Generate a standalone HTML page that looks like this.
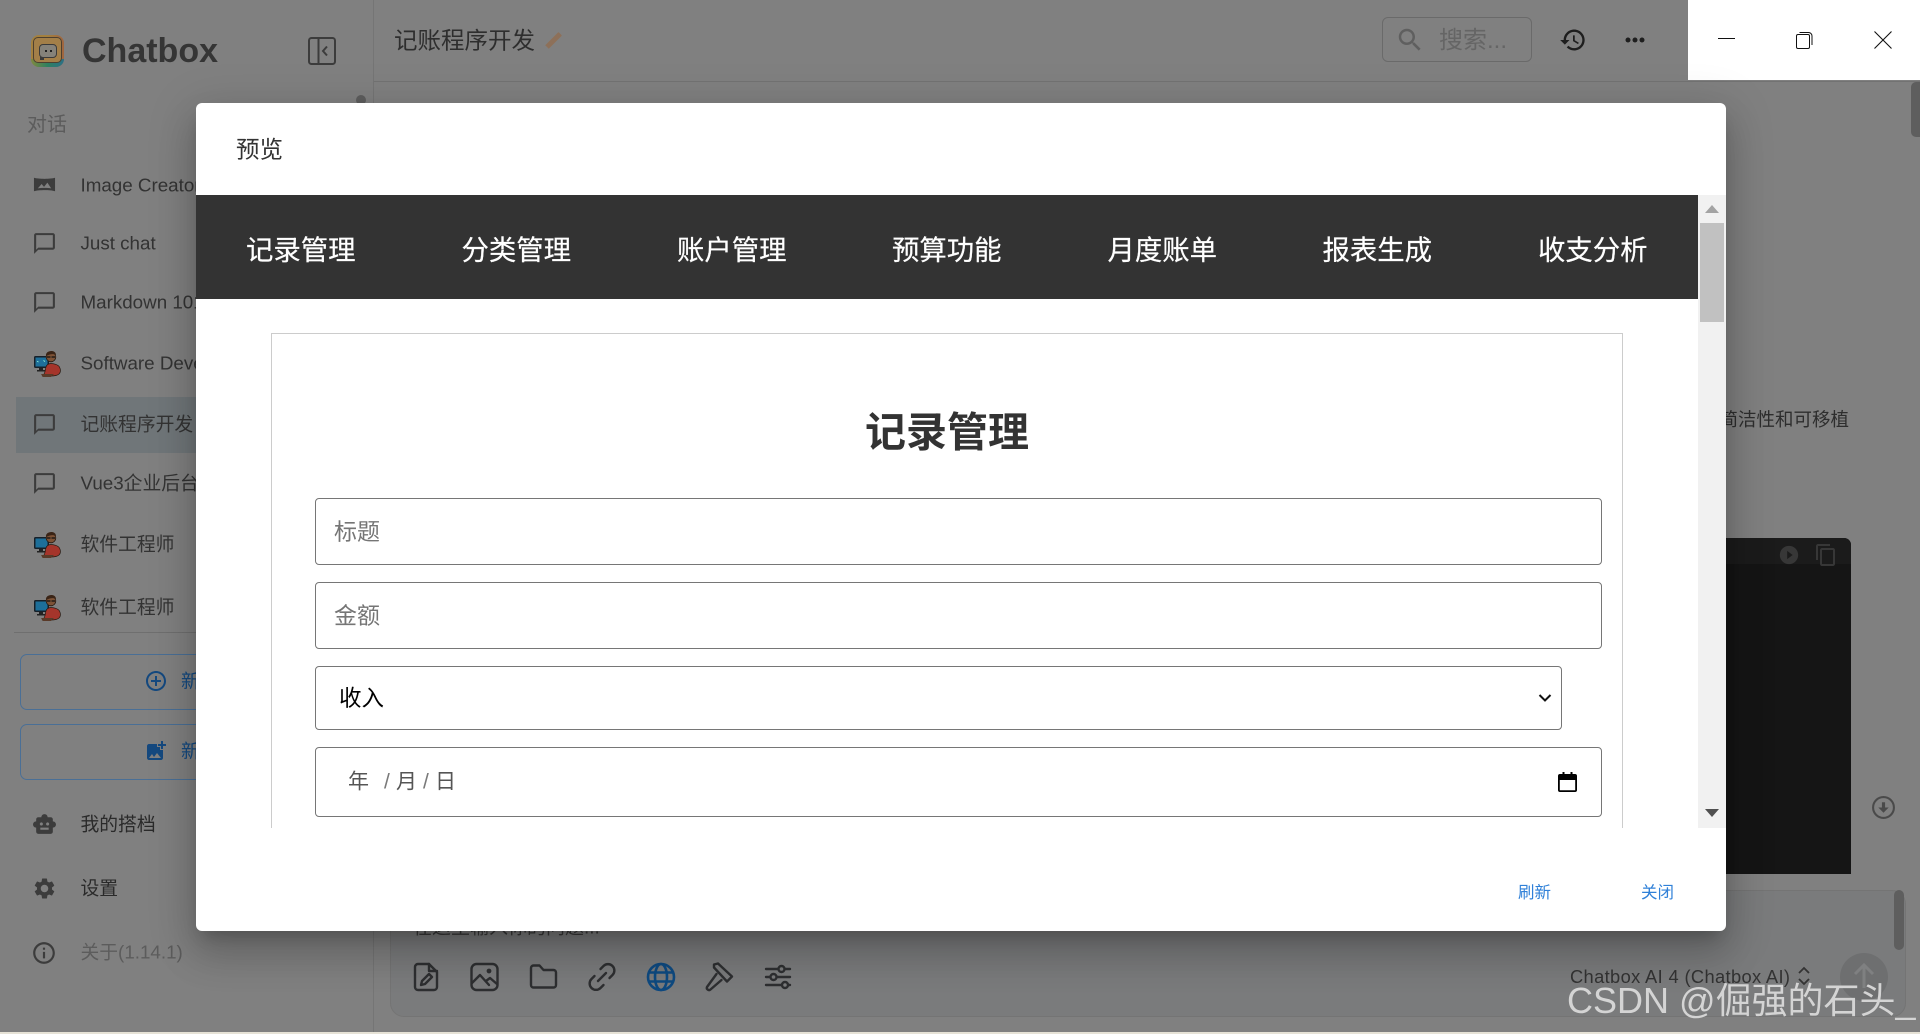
<!DOCTYPE html>
<html lang="zh-CN"><head><meta charset="utf-8"><title>Chatbox</title>
<style>
*{box-sizing:border-box}
html,body{margin:0;padding:0;width:1920px;height:1034px;overflow:hidden;background:#808080;font-family:"Liberation Sans","Noto Sans CJK SC",sans-serif}
.a{position:absolute}
.t{position:absolute;white-space:nowrap;line-height:1;transform:translateY(calc(-50% + 1px))}
svg{position:absolute;display:block;overflow:visible}
.s{font-size:18.8px;color:#333;left:80.5px}
.n{font-size:27.4px;color:#fff;top:249px;-webkit-text-stroke:.2px #fff}
.in{position:absolute;border:1.4px solid #767676;border-radius:4px;background:#fff}
</style></head><body>

<!-- background app -->
<div class="a" style="left:0;top:0;width:1920px;height:1032px;background:#808080"></div>
<div class="a" style="left:0;top:1032px;width:1920px;height:2px;background:#e6e2d6"></div>
<div class="a" style="left:373px;top:0;width:1px;height:1032px;background:#757575"></div>
<div class="a" style="left:374px;top:81px;width:1314px;height:1px;background:#727272"></div>
<div class="a" style="left:1688px;top:81px;width:232px;height:1px;background:#727272"></div>

<!-- logo -->
<div class="a" style="left:31px;top:35px;width:33px;height:32px;border-radius:8px;background:linear-gradient(90deg,#a3803f 0,#a3803f 50%,#a0653f 100%)"></div>
<div class="a" style="left:31px;top:59px;width:33px;height:8px;border-radius:0 0 8px 8px;background:linear-gradient(90deg,#7f8a3f,#2f8060 50%,#2b7088)"></div>
<div class="a" style="left:33px;top:37px;width:29px;height:26px;border-radius:5px;background:#a37f48;border:1px solid #4d4030"></div>
<div class="a" style="left:39px;top:44px;width:18px;height:14px;border-radius:4px;background:#85827a;border:1.6px solid #3a3a3a"></div>
<div class="a" style="left:40px;top:57px;width:4px;height:3px;background:#3a3a3a"></div>
<div class="a" style="left:45px;top:50px;width:2px;height:2px;background:#222"></div>
<div class="a" style="left:50px;top:50px;width:2px;height:2px;background:#222"></div>
<div class="t" style="left:82px;top:50px;font-size:34px;font-weight:700;color:#353535">Chatbox</div>
<svg style="left:308px;top:37px" width="28" height="28" viewBox="0 0 28 28" fill="none" stroke="#3c3c3c" stroke-width="2"><rect x="1" y="1" width="26" height="26" rx="2.5"/><path d="M10.5 1v26"/><path d="M19 9.5l-4 4.5 4 4.5"/></svg>

<div class="t" style="left:27px;top:124px;font-size:20px;color:#5c5c5c">对话</div>
<div class="a" style="left:356px;top:95px;width:10px;height:10px;border-radius:5px;background:#5e5e5e"></div>

<div class="a" style="left:16px;top:397px;width:180px;height:56px;background:#707679"></div>

<svg style="left:33px;top:173px" width="23" height="23" viewBox="0 0 24 24" fill="#3c3c3c"><path d="M1 5c5 1.5 17 1.5 22 0v14c-5-1.5-17-1.5-22 0z"/><path fill="#808080" d="M5 16l4-4.5 2.5 3 3.5-4.500 4 6c-4-.7-10-.7-14 0z"/></svg>
<div class="t s" style="top:185px">Image Creator</div>
<svg style="left:32px;top:231px" width="25" height="25" viewBox="0 0 24 24" fill="#3c3c3c"><path d="M20 2H4c-1.100 0-2 .9-2 2v18l4-4h14c1.100 0 2-.9 2-2V4c0-1.100-.9-2-2-2zm0 14H6l-2 2V4h16v12z"/></svg>
<div class="t s" style="top:243px">Just chat</div>
<svg style="left:32px;top:290px" width="25" height="25" viewBox="0 0 24 24" fill="#3c3c3c"><path d="M20 2H4c-1.100 0-2 .9-2 2v18l4-4h14c1.100 0 2-.9 2-2V4c0-1.100-.9-2-2-2zm0 14H6l-2 2V4h16v12z"/></svg>
<div class="t s" style="top:302px">Markdown 101</div>

<!-- avatars -->
<svg style="left:34px;top:350px" width="27" height="27" viewBox="0 0 27 27"><rect x="0" y="6" width="15" height="12" rx="1.500" fill="#172029"/><rect x="1.500" y="7.500" width="12" height="9" fill="#1d6f9a"/><path d="M4.500 12l-1.500-.7M9.500 10.500l1.500 1" stroke="#9fd" stroke-width=".8"/><path d="M5 18h4v2h3v1.500H3V20h2z" fill="#222"/><circle cx="17" cy="7" r="4.800" fill="#7d5236" stroke="#241a12" stroke-width=".8"/><path d="M12 6c-1-6 10-7 10-1-3-1.500-6-1-10 1z" fill="#3a2416"/><path d="M13 7h3.500M17.500 7H21" stroke="#111" stroke-width="1.200"/><path d="M8 26c2-1 3-3 3.500-7 .5-4 3-5.500 5.500-5.500s7 1 8.500 3.500c1.500 3 1.500 5-.5 7-2 1.800-5 2-8 2z" fill="#a5352b" stroke="#241a12" stroke-width=".7"/><path d="M7 24h13l-3 3H9z" fill="#5a3a28"/></svg>
<div class="t s" style="top:363px">Software Developer</div>

<svg style="left:32px;top:412px" width="25" height="25" viewBox="0 0 24 24" fill="#3c3c3c"><path d="M20 2H4c-1.100 0-2 .9-2 2v18l4-4h14c1.100 0 2-.9 2-2V4c0-1.100-.9-2-2-2zm0 14H6l-2 2V4h16v12z"/></svg>
<div class="t s" style="top:424px">记账程序开发</div>
<svg style="left:32px;top:471px" width="25" height="25" viewBox="0 0 24 24" fill="#3c3c3c"><path d="M20 2H4c-1.100 0-2 .9-2 2v18l4-4h14c1.100 0 2-.9 2-2V4c0-1.100-.9-2-2-2zm0 14H6l-2 2V4h16v12z"/></svg>
<div class="t s" style="top:483px">Vue3企业后台</div>

<svg style="left:34px;top:531px" width="27" height="27" viewBox="0 0 27 27"><rect x="0" y="6" width="15" height="12" rx="1.500" fill="#172029"/><rect x="1.500" y="7.500" width="12" height="9" fill="#1d6f9a"/><path d="M5 18h4v2h3v1.500H3V20h2z" fill="#222"/><circle cx="17" cy="7" r="4.800" fill="#7d5236" stroke="#241a12" stroke-width=".8"/><path d="M12 6c-1-6 10-7 10-1-3-1.500-6-1-10 1z" fill="#3a2416"/><path d="M13 7h3.500M17.500 7H21" stroke="#111" stroke-width="1.200"/><path d="M8 26c2-1 3-3 3.500-7 .5-4 3-5.500 5.500-5.500s7 1 8.500 3.500c1.500 3 1.500 5-.5 7-2 1.800-5 2-8 2z" fill="#a5352b" stroke="#241a12" stroke-width=".7"/><path d="M7 24h13l-3 3H9z" fill="#5a3a28"/></svg>
<div class="t s" style="top:544px">软件工程师</div>
<svg style="left:34px;top:594px" width="27" height="27" viewBox="0 0 27 27"><rect x="0" y="6" width="15" height="12" rx="1.500" fill="#172029"/><rect x="1.500" y="7.500" width="12" height="9" fill="#1d6f9a"/><path d="M5 18h4v2h3v1.500H3V20h2z" fill="#222"/><circle cx="17" cy="7" r="4.800" fill="#7d5236" stroke="#241a12" stroke-width=".8"/><path d="M12 6c-1-6 10-7 10-1-3-1.500-6-1-10 1z" fill="#3a2416"/><path d="M13 7h3.500M17.500 7H21" stroke="#111" stroke-width="1.200"/><path d="M8 26c2-1 3-3 3.500-7 .5-4 3-5.500 5.500-5.500s7 1 8.500 3.500c1.500 3 1.500 5-.5 7-2 1.800-5 2-8 2z" fill="#a5352b" stroke="#241a12" stroke-width=".7"/><path d="M7 24h13l-3 3H9z" fill="#5a3a28"/></svg>
<div class="t s" style="top:607px">软件工程师</div>

<div class="a" style="left:14px;top:632px;width:350px;height:1px;background:#6f6f6f"></div>
<div class="a" style="left:20px;top:654px;width:340px;height:56px;border:1.4px solid #4a6f96;border-radius:7px"></div>
<div class="a" style="left:20px;top:724px;width:340px;height:56px;border:1.4px solid #4a6f96;border-radius:7px"></div>
<svg style="left:144px;top:669px" width="24" height="24" viewBox="0 0 24 24" fill="#15497f"><path d="M13 7h-2v4H7v2h4v4h2v-4h4v-2h-4V7zm-1-5C6.480 2 2 6.480 2 12s4.480 10 10 10 10-4.480 10-10S17.520 2 12 2zm0 18c-4.410 0-8-3.590-8-8s3.590-8 8-8 8 3.590 8 8-3.590 8-8 8z"/></svg>
<div class="t" style="left:181px;top:681px;font-size:18.8px;color:#15497f">新对话</div>
<svg style="left:144px;top:739px" width="24" height="24" viewBox="0 0 24 24" fill="#15497f"><path d="M19 7v2.990s-1.990.01-2 0V7h-3s.01-1.990 0-2h3V2h2v3h3v2h-3zm-3 4V8h-3V5H5c-1.100 0-2 .9-2 2v12c0 1.100.9 2 2 2h12c1.100 0 2-.9 2-2v-8h-3zM5 19l3-4 2 3 3-4 4 5H5z"/></svg>
<div class="t" style="left:181px;top:751px;font-size:18.8px;color:#15497f">新图片</div>

<svg style="left:32px;top:812px" width="25" height="25" viewBox="0 0 24 24" fill="#3c3c3c"><path d="M20 9V7c0-1.100-.9-2-2-2h-3c0-1.660-1.340-3-3-3S9 3.340 9 5H6c-1.100 0-2 .9-2 2v2c-1.660 0-3 1.340-3 3s1.340 3 3 3v4c0 1.100.9 2 2 2h12c1.100 0 2-.9 2-2v-4c1.660 0 3-1.340 3-3s-1.340-3-3-3zM7.500 11.500c0-.83.67-1.500 1.500-1.500s1.500.67 1.500 1.500S9.830 13 9 13s-1.500-.67-1.500-1.500zM16 17H8v-2h8v2zm-1-4c-.83 0-1.500-.67-1.500-1.500S14.170 10 15 10s1.500.67 1.500 1.500S15.830 13 15 13z"/></svg>
<div class="t s" style="top:824px;color:#2a2a2a">我的搭档</div>
<svg style="left:32px;top:876px" width="25" height="25" viewBox="0 0 24 24" fill="#3c3c3c"><path d="M19.140 12.940c.04-.3.06-.61.06-.94 0-.32-.02-.64-.07-.94l2.030-1.580c.18-.14.23-.41.12-.61l-1.920-3.320c-.12-.22-.37-.29-.59-.22l-2.390.96c-.5-.38-1.030-.7-1.620-.94l-.36-2.540c-.04-.24-.24-.41-.48-.41h-3.840c-.24 0-.43.17-.47.41l-.36 2.540c-.59.24-1.130.57-1.620.94l-2.390-.96c-.22-.08-.47 0-.59.22L2.740 8.870c-.12.21-.08.47.12.61l2.030 1.580c-.05.3-.09.63-.09.94s.02.64.07.94l-2.030 1.580c-.18.14-.23.41-.12.61l1.920 3.320c.12.22.37.29.59.22l2.390-.96c.5.38 1.030.7 1.620.94l.36 2.540c.05.24.24.41.48.41h3.840c.24 0 .44-.17.47-.41l.36-2.540c.59-.24 1.130-.56 1.620-.94l2.390.96c.22.08.47 0 .59-.22l1.920-3.320c.12-.22.07-.47-.12-.61l-2.010-1.580zM12 15.600c-1.980 0-3.600-1.620-3.600-3.600s1.620-3.600 3.600-3.600 3.600 1.620 3.600 3.600-1.620 3.600-3.600 3.600z"/></svg>
<div class="t s" style="top:888px;color:#2a2a2a">设置</div>
<svg style="left:31px;top:940px" width="26" height="26" viewBox="0 0 24 24" fill="#3c3c3c"><path d="M11 7h2v2h-2zm0 4h2v6h-2zm1-9C6.480 2 2 6.480 2 12s4.480 10 10 10 10-4.480 10-10S17.520 2 12 2zm0 18c-4.410 0-8-3.590-8-8s3.590-8 8-8 8 3.590 8 8-3.590 8-8 8z"/></svg>
<div class="t s" style="top:952px;color:#5c5c5c">关于(1.14.1)</div>

<!-- header -->
<div class="t" style="left:394px;top:40px;font-size:23.5px;color:#2e2e2e">记账程序开发</div>
<svg style="left:544px;top:30px" width="20" height="20" viewBox="0 0 20 20"><path d="M3 17L16 4" stroke="#8d7059" stroke-width="5"/><path d="M14 3l3 3" stroke="#8d7059" stroke-width="2"/></svg>
<div class="a" style="left:1382px;top:17px;width:150px;height:45px;border:1.4px solid #6a6a6a;border-radius:6px"></div>
<svg style="left:1395px;top:25px" width="30" height="30" viewBox="0 0 24 24" fill="#5f5f5f"><path d="M15.500 14h-.79l-.28-.27C15.410 12.590 16 11.110 16 9.500 16 5.910 13.090 3 9.500 3S3 5.910 3 9.500 5.910 16 9.500 16c1.610 0 3.090-.59 4.230-1.570l.27.28v.79l5 4.990L20.490 19l-4.990-5zm-6 0C7.010 14 5 11.990 5 9.500S7.010 5 9.500 5 14 7.010 14 9.500 11.990 14 9.500 14z"/></svg>
<div class="t" style="left:1439px;top:40px;font-size:24px;color:#656565">搜索...</div>
<svg style="left:1559px;top:26px" width="28" height="28" viewBox="0 0 24 24" fill="#1e1e1e"><path d="M13 3c-4.970 0-9 4.030-9 9H1l3.890 3.890.07.14L9 12H6c0-3.870 3.130-7 7-7s7 3.130 7 7-3.130 7-7 7c-1.930 0-3.680-.79-4.940-2.060l-1.420 1.420C8.270 19.990 10.510 21 13 21c4.970 0 9-4.030 9-9s-4.030-9-9-9zm-1 5v5l4.280 2.540.72-1.210-3.500-2.080V8H12z"/></svg>
<svg style="left:1625px;top:36px" width="20" height="8" viewBox="0 0 20 8" fill="#1e1e1e"><circle cx="3" cy="4" r="2.500"/><circle cx="10" cy="4" r="2.500"/><circle cx="17" cy="4" r="2.500"/></svg>

<!-- window controls -->
<div class="a" style="left:1688px;top:0;width:232px;height:80px;background:#fff"></div>
<svg style="left:1718px;top:38px" width="18" height="2"><rect width="17" height="1" fill="#111"/></svg>
<svg style="left:1796px;top:31px" width="18" height="18" viewBox="0 0 18 18" fill="none" stroke="#111" stroke-width="1"><rect x=".5" y="3.500" width="13" height="14" rx="1.500"/><path d="M3.500 1.500h9a3.500 3.500 0 0 1 3.500 3.500v9"/></svg>
<svg style="left:1874px;top:31px" width="18" height="18" viewBox="0 0 18 18" fill="none" stroke="#111" stroke-width="1.100"><path d="M.5.5l17 17M17.500.5l-17 17"/></svg>

<!-- main scrollbar -->
<div class="a" style="left:1911px;top:82px;width:9px;height:55px;border-radius:5px 0 0 5px;background:#5e5e5e"></div>

<!-- chat behind modal -->
<div class="t" style="left:1701px;top:419px;font-size:18.500px;color:#2e2e2e">持简洁性和可移植</div>
<div class="a" style="left:1500px;top:538px;width:351px;height:336px;background:#151515;border-radius:7px 7px 0 0"></div>
<div class="a" style="left:1500px;top:538px;width:351px;height:26px;background:#1b1b1b;border-radius:7px 7px 0 0"></div>
<svg style="left:1778px;top:544px" width="22" height="22" viewBox="0 0 24 24" fill="#373737"><path d="M12 2a10 10 0 1 0 0 20 10 10 0 0 0 0-20zm-2 14.500v-9l6 4.500-6 4.500z"/></svg>
<svg style="left:1814px;top:543px" width="24" height="24" viewBox="0 0 24 24" fill="#373737"><path d="M16 1H4c-1.100 0-2 .9-2 2v14h2V3h12V1zm3 4H8c-1.100 0-2 .9-2 2v14c0 1.100.9 2 2 2h11c1.100 0 2-.9 2-2V7c0-1.100-.9-2-2-2zm0 16H8V7h11v14z"/></svg>
<svg style="left:1871px;top:795px" width="25" height="25" viewBox="0 0 24 24" fill="none" stroke="#4a4a4a" stroke-width="2"><circle cx="12" cy="12" r="10"/><path fill="#4a4a4a" stroke="none" d="M10.500 7h3v5H17l-5 5-5-5h3.500z"/></svg>

<!-- input box -->
<div class="a" style="left:390px;top:890px;width:1516px;height:127px;border:1px solid #747474;border-radius:14px;background:#7a7b7c"></div>
<div class="a" style="left:1894px;top:890px;width:10px;height:60px;border-radius:5px;background:#5e5e5e"></div>
<div class="t" style="left:413px;top:927px;font-size:19px;color:#3a3a3a">在这里输入你的问题...</div>
<svg style="left:411px;top:962px" width="29" height="30" viewBox="0 0 29 30" fill="none" stroke="#2e2f31" stroke-width="2.400" stroke-linejoin="round" stroke-linecap="round"><path d="M7 2h11l8 8v15a3 3 0 0 1-3 3H7a3 3 0 0 1-3-3V5a3 3 0 0 1 3-3z"/><path d="M18 2v7h8"/><path d="M10 23l1-4 7-7 3 3-7 7z"/></svg>
<svg style="left:470px;top:962px" width="29" height="30" viewBox="0 0 29 30" fill="none" stroke="#2e2f31" stroke-width="2.400" stroke-linejoin="round" stroke-linecap="round"><rect x="1.500" y="2" width="26" height="26" rx="5"/><circle cx="19" cy="9" r="1.200" fill="#2e2f31"/><path d="M2 21l8-8 9 10M16 19l4-3 7 6"/></svg>
<svg style="left:529px;top:963px" width="29" height="27" viewBox="0 0 29 27" fill="none" stroke="#2e2f31" stroke-width="2.400" stroke-linejoin="round"><path d="M2 5a2.500 2.500 0 0 1 2.500-2.500h6l4 4.500h10a2.500 2.500 0 0 1 2.500 2.500V22a2.500 2.500 0 0 1-2.500 2.500h-20A2.500 2.500 0 0 1 2 22z"/></svg>
<svg style="left:588px;top:963px" width="28" height="28" viewBox="0 0 28 28" fill="none" stroke="#2e2f31" stroke-width="2.400" stroke-linecap="round"><path d="M10 18l8-8"/><path d="M12.500 6l3-3a6.300 6.300 0 0 1 9 9l-3 3"/><path d="M15.500 22l-3 3a6.300 6.300 0 0 1-9-9l3-3"/></svg>
<svg style="left:646px;top:962px" width="30" height="30" viewBox="0 0 30 30" fill="none" stroke="#0f4a80" stroke-width="2.600"><circle cx="15" cy="15" r="13"/><ellipse cx="15" cy="15" rx="6" ry="13"/><path d="M3 10.500h24M3 19.500h24"/></svg>
<svg style="left:705px;top:962px" width="29" height="30" viewBox="0 0 29 30" fill="none" stroke="#2e2f31" stroke-width="2.400" stroke-linejoin="round" stroke-linecap="round"><path d="M9 2.500l4-1 14 13-5 5-13-14z"/><path d="M11.500 12L2 25a2.200 2.200 0 0 0 3.500 2.500L16.500 18"/></svg>
<svg style="left:764px;top:963px" width="28" height="28" viewBox="0 0 28 28" fill="none" stroke="#2e2f31" stroke-width="2.400" stroke-linecap="round"><path d="M2 6h12M21 6h5M2 14h4M13 14h13M2 22h16M24 22h2"/><circle cx="17.500" cy="6" r="3"/><circle cx="9.500" cy="14" r="3"/><circle cx="21" cy="22" r="3"/></svg>

<div class="t" style="left:1570px;top:976px;font-size:18.300px;letter-spacing:.36px;color:#333">Chatbox AI 4 (Chatbox AI)</div>
<svg style="left:1797px;top:966px" width="14" height="20" viewBox="0 0 14 20" fill="none" stroke="#333" stroke-width="1.800"><path d="M2 7l5-5 5 5M2 13l5 5 5-5"/></svg>
<div class="a" style="left:1840px;top:953px;width:48px;height:48px;border-radius:50%;background:#6e6f70"></div>
<svg style="left:1852px;top:962px" width="24" height="28" viewBox="0 0 24 28" fill="none" stroke="#7f8081" stroke-width="3"><path d="M12 26V3M3 12l9-9 9 9"/></svg>

<!-- modal -->
<div class="a" style="left:196px;top:103px;width:1530px;height:828px;background:#fff;border-radius:6px;box-shadow:0 11px 15px -7px rgba(0,0,0,.2),0 24px 38px 3px rgba(0,0,0,.14),0 9px 46px 8px rgba(0,0,0,.12);overflow:hidden">
  <div class="a" style="left:0;top:92px;width:1502px;height:104px;background:#333"></div>
  <div class="a" style="left:1502px;top:92px;width:28px;height:633px;background:#f1f1f1"></div>
  <div class="a" style="left:1504px;top:120px;width:24px;height:99px;background:#c1c1c1"></div>
  <svg style="left:1509px;top:102px" width="14" height="8"><path d="M7 0l7 8H0z" fill="#a3a3a3"/></svg>
  <svg style="left:1509px;top:706px" width="14" height="8"><path d="M0 0h14L7 8z" fill="#505050"/></svg>
</div>
<div class="t" style="left:236px;top:149px;font-size:23.500px;color:#333">预览</div>
<div class="t n" style="left:246px">记录管理</div>
<div class="t n" style="left:461.500px">分类管理</div>
<div class="t n" style="left:677px">账户管理</div>
<div class="t n" style="left:892px">预算功能</div>
<div class="t n" style="left:1107.500px">月度账单</div>
<div class="t n" style="left:1322.500px">报表生成</div>
<div class="t n" style="left:1538px">收支分析</div>

<div class="a" style="left:271px;top:333px;width:1352px;height:495px;border:1.4px solid #ccc;border-bottom:0"></div>
<div class="t" style="left:865px;top:432px;font-size:41px;font-weight:700;color:#333">记录管理</div>

<div class="in" style="left:315px;top:498px;width:1287px;height:67px"></div>
<div class="t" style="left:334px;top:531px;font-size:23px;color:#757575">标题</div>
<div class="in" style="left:315px;top:582px;width:1287px;height:67px"></div>
<div class="t" style="left:334px;top:615px;font-size:23px;color:#757575">金额</div>
<div class="in" style="left:315px;top:666px;width:1247px;height:64px"></div>
<div class="t" style="left:339px;top:698px;font-size:22.500px;color:#000">收入</div>
<svg style="left:1538px;top:693px" width="14" height="10" viewBox="0 0 14 10" fill="none" stroke="#111" stroke-width="2"><path d="M1.500 2l5.500 5.500L12.500 2"/></svg>
<div class="in" style="left:315px;top:747px;width:1287px;height:70px"></div>
<div class="t" style="left:348px;top:781px;font-size:21px;color:#555">年</div>
<div class="t" style="left:384px;top:781px;font-size:21px;color:#7a7a7a">/</div>
<div class="t" style="left:396px;top:781px;font-size:21px;color:#555">月</div>
<div class="t" style="left:423px;top:781px;font-size:21px;color:#7a7a7a">/</div>
<div class="t" style="left:435px;top:781px;font-size:21px;color:#555">日</div>
<svg style="left:1558px;top:772px" width="19" height="20" viewBox="0 0 19 20"><path fill="#000" d="M2 2h2.500V0h2v2h6V0h2v2H17a2 2 0 0 1 2 2v14a2 2 0 0 1-2 2H2a2 2 0 0 1-2-2V4a2 2 0 0 1 2-2zm-.2 6v10.200h15.400V8z"/></svg>

<div class="t" style="left:1518px;top:892px;font-size:16.500px;color:#2f80d8">刷新</div>
<div class="t" style="left:1641px;top:892px;font-size:16.500px;color:#2f80d8">关闭</div>

<!-- watermark -->
<div class="t" style="left:1567px;top:1000px;font-size:36px;color:#d4d4d4">CSDN @倔强的石头_</div>
</body></html>
